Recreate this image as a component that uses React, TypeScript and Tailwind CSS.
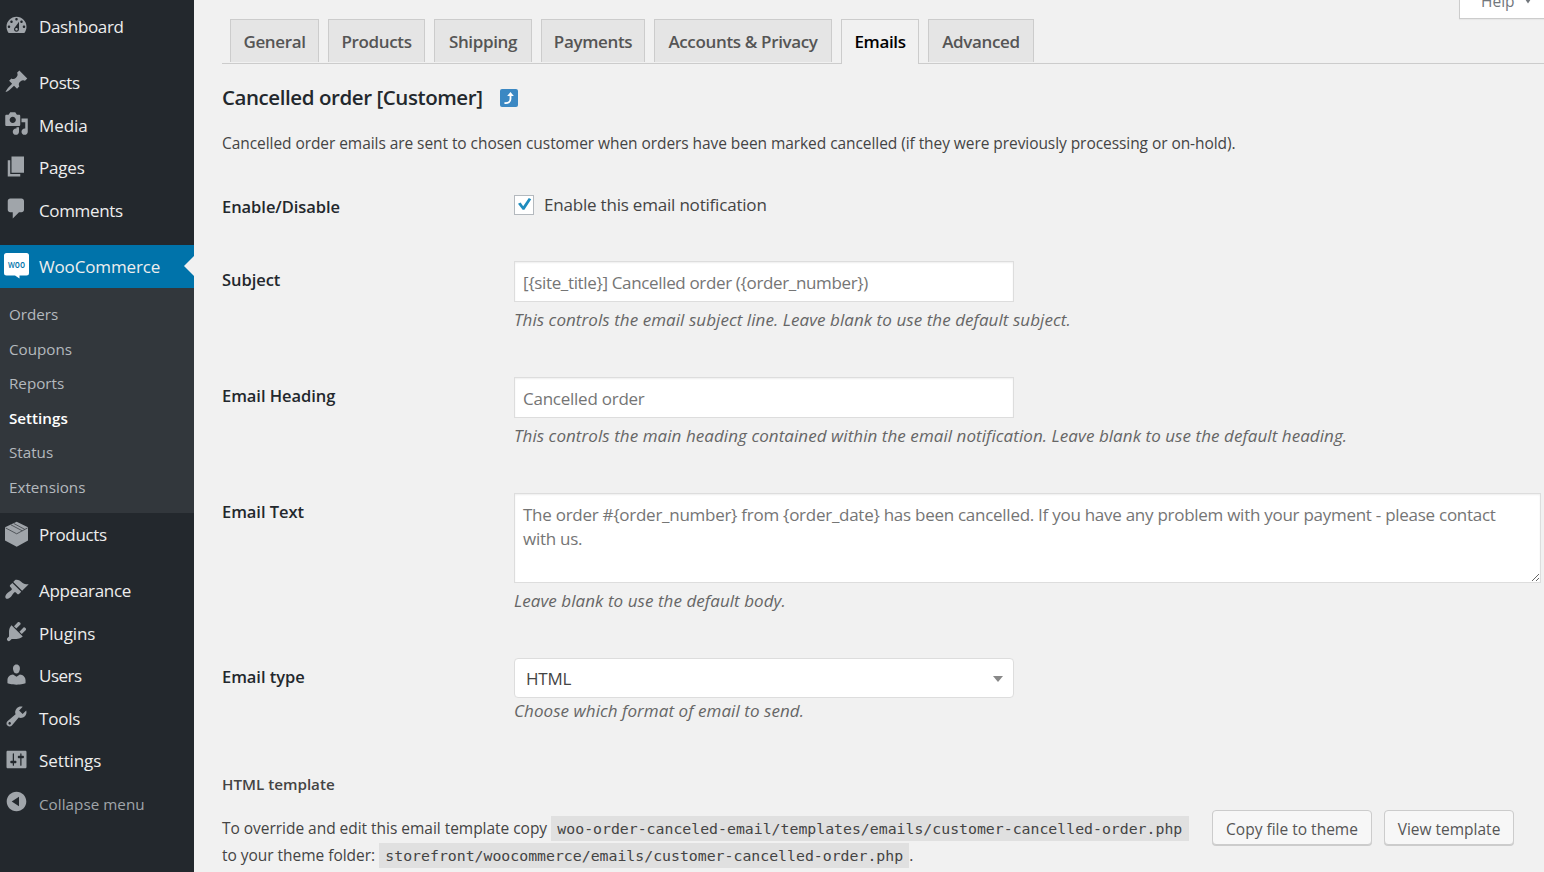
import { useState, type ReactNode } from "react";
import { clsx } from "clsx";

type MenuItem = { label: string; icon: string; tracking: string };

const ICONS: Record<string, string> = {
  dashboard:
    "M3.76 16h12.48c1.1-1.37 1.76-3.11 1.76-5 0-4.42-3.58-8-8-8s-8 3.58-8 8c0 1.89.66 3.63 1.76 5zM10 4c.55 0 1 .45 1 1s-.45 1-1 1-1-.45-1-1 .45-1 1-1zM6 6c.55 0 1 .45 1 1s-.45 1-1 1-1-.45-1-1 .45-1 1-1zm8 0c.55 0 1 .45 1 1s-.45 1-1 1-1-.45-1-1 .45-1 1-1zm-5.37 5.55L12 7v6c0 1.1-.9 2-2 2s-2-.9-2-2c0-.57.24-1.08.63-1.45zM4 10c.55 0 1 .45 1 1s-.45 1-1 1-1-.45-1-1 .45-1 1-1zm12 0c.55 0 1 .45 1 1s-.45 1-1 1-1-.45-1-1 .45-1 1-1zm-5 3c0-.55-.45-1-1-1s-1 .45-1 1 .45 1 1 1 1-.45 1-1z",
  post: "M10.44 3.02l1.82-1.82 6.36 6.35-1.83 1.82c-1.05-.68-2.48-.57-3.41.36l-.75.75c-.92.93-1.04 2.35-.35 3.41l-1.83 1.82-2.41-2.41-2.8 2.79c-.42.42-3.38 2.71-3.8 2.29s1.86-3.39 2.28-3.81l2.79-2.79L4.1 9.36l1.83-1.82c1.05.69 2.48.57 3.4-.36l.75-.75c.93-.92 1.05-2.35.36-3.41z",
  media:
    "M13 11V4c0-.55-.45-1-1-1h-1.67L9 1H5L3.67 3H2c-.55 0-1 .45-1 1v7c0 .55.45 1 1 1h10c.55 0 1-.45 1-1zM7 4.5c1.38 0 2.5 1.12 2.5 2.5S8.38 9.5 7 9.5 4.5 8.38 4.5 7 5.62 4.5 7 4.5zM14 6h5v10.5c0 1.38-1.12 2.5-2.5 2.5S14 17.88 14 16.5s1.12-2.5 2.5-2.5c.17 0 .34.02.5.05V9h-3V6zm-4 8.05V13h2v3.5c0 1.38-1.12 2.5-2.5 2.5S7 17.88 7 16.5 8.12 14 9.5 14c.17 0 .34.02.5.05z",
  page: "M6 15V2h10v13H6zm-1 1h8v2H3V5h2v11z",
  comments: "M5 2h9c1.1 0 2 .9 2 2v7c0 1.1-.9 2-2 2h-2l-5 5v-5H5c-1.1 0-2-.9-2-2V4c0-1.1.9-2 2-2z",
  appearance:
    "M14.48 11.06L7.41 3.99l1.5-1.5c.5-.56 2.3-.47 3.51.32 1.21.8 1.43 1.28 2.91 2.1 1.18.64 2.45 1.26 4.45.85zm-.71.71L6.7 4.7 4.93 6.47c-.39.39-.39 1.02 0 1.41l1.06 1.06c.39.39.39 1.03 0 1.42-.6.6-1.43 1.11-2.21 1.69-.35.26-.7.53-1.01.84C1.43 14.23.4 16.08 1.4 17.07c.99 1 2.84-.03 4.18-1.36.31-.31.58-.66.85-1.02.57-.78 1.08-1.61 1.69-2.21.39-.39 1.02-.39 1.41 0l1.06 1.06c.39.39 1.02.39 1.41 0z",
  plugins:
    "M13.11 4.36L9.87 7.6 8 5.73l3.24-3.24c.35-.34 1.05-.2 1.56.32.52.51.66 1.21.31 1.55zm-8 1.77l.91-1.12 9.01 9.01-1.19.84c-.71.71-2.63 1.16-3.82 1.16H6.14L4.9 17.26c-.59.59-1.54.59-2.12 0-.59-.58-.59-1.53 0-2.12l1.24-1.24v-3.88c0-1.13.4-3.19 1.09-3.89zm7.26 3.97l3.24-3.24c.34-.35 1.04-.21 1.55.31.52.51.66 1.21.31 1.55l-3.24 3.25z",
  users:
    "M10 9.25c-2.27 0-2.73-3.44-2.73-3.44C7 4.02 7.82 2 9.97 2c2.16 0 2.98 2.02 2.71 3.81 0 0-.41 3.44-2.68 3.44zm0 2.57L12.72 10c2.39 0 4.52 2.33 4.52 4.53v2.49s-3.65 1.13-7.24 1.13c-3.65 0-7.24-1.13-7.24-1.13v-2.49c0-2.25 1.94-4.48 4.47-4.48z",
  tools:
    "M16.68 9.77c-1.34 1.34-3.3 1.67-4.95.99l-5.41 6.52c-.99.99-2.59.99-3.58 0s-.99-2.59 0-3.57l6.52-5.42c-.68-1.65-.35-3.61.99-4.95 1.28-1.28 3.12-1.62 4.72-1.06l-2.89 2.89 2.82 2.82 2.86-2.87c.53 1.58.18 3.39-1.08 4.65zM3.81 16.21c.4.39 1.04.39 1.43 0 .4-.4.4-1.04 0-1.43-.39-.4-1.03-.4-1.43 0-.39.39-.39 1.03 0 1.43z",
  settings:
    "M18 16V4c0-.55-.45-1-1-1H3c-.55 0-1 .45-1 1v12c0 .55.45 1 1 1h14c.55 0 1-.45 1-1zM8 11h1c.55 0 1 .45 1 1s-.45 1-1 1H8v1.5c0 .28-.22.5-.5.5s-.5-.22-.5-.5V13H6c-.55 0-1-.45-1-1s.45-1 1-1h1V5.5c0-.28.22-.5.5-.5s.5.22.5.5V11zm5-2h-1c-.55 0-1-.45-1-1s.45-1 1-1h1V5.5c0-.28.22-.5.5-.5s.5.22.5.5V7h1c.55 0 1 .45 1 1s-.45 1-1 1h-1v5.5c0 .28-.22.5-.5.5s-.5-.22-.5-.5V9z",
  collapse:
    "M10 2.16c4.33 0 7.84 3.51 7.84 7.84s-3.51 7.84-7.84 7.84S2.16 14.33 2.16 10 5.71 2.16 10 2.16zm2 11.72V6.12L6.18 9.97z",
};

const MENU_TOP: MenuItem[] = [
  { label: "Posts", icon: "post", tracking: "tracking-[-0.4px]" },
  { label: "Media", icon: "media", tracking: "tracking-[-0.1px]" },
  { label: "Pages", icon: "page", tracking: "tracking-[-0.2px]" },
  { label: "Comments", icon: "comments", tracking: "tracking-[-0.35px]" },
];

const MENU_BOTTOM: MenuItem[] = [
  { label: "Appearance", icon: "appearance", tracking: "tracking-[-0.3px]" },
  { label: "Plugins", icon: "plugins", tracking: "tracking-[-0.1px]" },
  { label: "Users", icon: "users", tracking: "tracking-[-0.5px]" },
  { label: "Tools", icon: "tools", tracking: "tracking-[-0.2px]" },
  { label: "Settings", icon: "settings", tracking: "tracking-[-0.1px]" },
];

const SUBMENU = ["Orders", "Coupons", "Reports", "Settings", "Status", "Extensions"];

const TABS = [
  { label: "General", width: "w-[89px]" },
  { label: "Products", width: "w-[97px]" },
  { label: "Shipping", width: "w-[98px]" },
  { label: "Payments", width: "w-[104px]" },
  { label: "Accounts & Privacy", width: "w-[178px]" },
  { label: "Emails", width: "w-[78px]" },
  { label: "Advanced", width: "w-[106px]" },
];

function MenuRow({ label, tracking = "tracking-[-0.35px]", children }: { label: string; tracking?: string; children: ReactNode }) {
  return (
    <a href="#" className="flex h-[42.5px] items-start pl-1 text-[17px] text-[#eee]">
      <span className="mt-[7.5px] h-[25px] w-[35px] shrink-0">{children}</span>
      <span className={clsx("leading-[43.5px]", tracking)}>{label}</span>
    </a>
  );
}

function DashIcon({ name }: { name: string }) {
  return (
    <svg viewBox="0 0 20 20" className="h-[25px] w-[25px] fill-[#a0a5aa]">
      <path d={ICONS[name]} />
    </svg>
  );
}

function ProductIcon() {
  return (
    <svg viewBox="0 0 25 25" className="h-[25px] w-[25px] overflow-visible">
      <path d="M12.7 .8L24 6.3v13.1L12.7 25.8 1 19.4V6.3z" fill="#a0a5aa" />
      <path d="M1.5 6.9l11.2 5.9 11-5.9M7 3.9l11.3 5.9M9.8 2.5l11 5.9" fill="none" stroke="#3c4146" strokeWidth="0.8" />
    </svg>
  );
}

function WooIcon() {
  return (
    <svg viewBox="0 0 25 26" className="h-[26px] w-[25px] overflow-visible">
      <path d="M2.5 0h20A2.5 2.5 0 0 1 25 2.5V20a2.5 2.5 0 0 1-2.5 2.5H15.5V25.5l-4.5-3H2.5A2.5 2.5 0 0 1 0 20V2.5A2.5 2.5 0 0 1 2.5 0z" fill="#fff" />
      <text x="12.5" y="14.8" textAnchor="middle" textLength="17" lengthAdjust="spacingAndGlyphs" fontSize="9.5" fontWeight="600" fill="#0073aa">
        W<tspan fontSize="11">oo</tspan>
      </text>
    </svg>
  );
}

function Sidebar() {
  return (
    <nav className="flex w-[194px] shrink-0 flex-col bg-[#23282d] pt-[5px]">
      <MenuRow label="Dashboard"><DashIcon name="dashboard" /></MenuRow>
      <div className="mt-[13.75px]">
        {MENU_TOP.map((m) => (
          <MenuRow key={m.label} label={m.label} tracking={m.tracking}><DashIcon name={m.icon} /></MenuRow>
        ))}
      </div>
      <div className="relative mt-[13.75px] bg-[#0073aa] text-white">
        <MenuRow label="WooCommerce" tracking="tracking-[-0.15px]"><WooIcon /></MenuRow>
        <svg viewBox="0 0 10 20" className="absolute top-[11px] right-0 h-5 w-2.5 fill-[#f1f1f1]">
          <path d="M10 0v20L0 10z" />
        </svg>
      </div>
      <div className="flex h-[225.5px] flex-col bg-[#32373c] pt-[9.5px] pl-[9px]">
        {SUBMENU.map((label) => (
          <a key={label} href="#"
            className={clsx("h-[34.6px] text-[15.2px] leading-[34.6px]", label === "Settings" ? "font-semibold text-white" : "text-[#b4b9be]")}>
            {label}
          </a>
        ))}
      </div>
      <MenuRow label="Products"><ProductIcon /></MenuRow>
      <div className="mt-[13.75px]">
        {MENU_BOTTOM.map((m) => (
          <MenuRow key={m.label} label={m.label} tracking={m.tracking}><DashIcon name={m.icon} /></MenuRow>
        ))}
      </div>
      <a href="#" className="flex h-[42.5px] pl-1 text-[15.2px] text-[#a0a5aa]">
        <span className="mt-[7.5px] w-[35px]"><DashIcon name="collapse" /></span>
        <span className="leading-[45px] tracking-[0.05px]">Collapse menu</span>
      </a>
    </nav>
  );
}

function FormRow({ label, height, children }: { label: string; height: string; children: ReactNode }) {
  return (
    <div className={clsx("flex", height)}>
      <div className="w-[292px] shrink-0 pt-[7px] text-[16.5px] leading-6 font-semibold tracking-[-0.05px] text-[#23282d]">{label}</div>
      <div className="min-w-0 flex-1">{children}</div>
    </div>
  );
}

const fieldClass =
  "block border border-[#ddd] bg-white px-2 text-[17px] text-[#32373c] shadow-[inset_0_1px_2px_rgba(0,0,0,0.07)] outline-none placeholder:text-[#757575]";
const hintClass = "text-[17px] leading-6 whitespace-nowrap text-[#666] italic tracking-[0.06px]";
const codeClass = "bg-[#e0e0e0] px-[6.25px] py-1 font-['DejaVu_Sans_Mono',monospace] text-[14.83px] tracking-normal";
const buttonClass =
  "h-[35px] rounded-[4px] border border-[#ccc] bg-[#f7f7f7] pt-1 text-[15.5px] whitespace-nowrap text-[#555] shadow-[0_1px_0_#ccc]";

export default function App() {
  const [enabled, setEnabled] = useState(true);
  const [tab, setTab] = useState("Emails");

  return (
    <div className="flex h-[872px] w-[1544px] overflow-hidden bg-[#f1f1f1] font-['Open_Sans','Noto_Sans',sans-serif] text-[#444]">
      <Sidebar />
      <main className="relative flex min-w-0 flex-1 flex-col pl-7">
        <button className="absolute -top-4 -right-px flex h-[35px] w-[86px] items-center border border-[#ccc] bg-white pl-[21px] text-[15.5px] text-[#72777c] shadow-[0_1px_1px_rgba(0,0,0,0.04)]">
          Help
          <svg viewBox="0 0 8 5" className="ml-[9px] h-[5px] w-2 fill-[#72777c]"><path d="M1 0h6L4 4.5z" /></svg>
        </button>

        {/* Settings tabs */}
        <div className="mt-[19px] flex h-[45px] gap-[9px] border-b border-[#ccc] pl-2">
          {TABS.map((t) => (
            <button key={t.label} onClick={() => setTab(t.label)}
              className={clsx(
                "border border-b-0 border-[#ccc] text-[17px] font-semibold tracking-[-0.35px] whitespace-nowrap",
                t.width,
                t.label === tab ? "h-[45px] bg-[#f1f1f1] pb-px text-black" : "mb-px h-[43px] bg-[#e5e5e5] pt-px text-[#555]",
              )}>
              {t.label}
            </button>
          ))}
        </div>

        <h2 className="mt-[19px] flex h-[30px] items-center text-[20.5px] font-semibold tracking-[-0.43px] text-[#23282d]">
          <span className="w-[278px] pb-[2px] whitespace-nowrap">Cancelled order [Customer]</span>
          <a href="#">
            <svg viewBox="0 0 18 18" className="h-[18px] w-[18px]">
              <rect width="18" height="18" rx="2" fill="#3b88c3" />
              <path d="M4.5 14c3.8.4 6-1 6-4.300V6" fill="none" stroke="#fff" strokeWidth="1.8" />
              <path d="M7.200 7l3.300-4 3.300 4z" fill="#fff" />
            </svg>
          </a>
        </h2>
        <p className="mt-[18px] text-[15.5px] leading-6 tracking-[-0.065px] whitespace-nowrap">
          Cancelled order emails are sent to chosen customer when orders have been marked cancelled (if they were previously processing or on-hold).
        </p>

        <div className="mt-[33px]">
          <FormRow label="Enable/Disable" height="h-[73px]">
            <label className="flex items-center pt-[5px]">
              <input type="checkbox" checked={enabled} onChange={(e) => setEnabled(e.target.checked)} className="sr-only" />
              <span className="flex h-5 w-5 items-center justify-center border border-[#b4b9be] bg-white">
                {enabled && (
                  <svg viewBox="0 0 18 18" className="h-[18px] w-[18px] fill-[#1e8cbe]">
                    <path d="M3 7.800l2.600-1.200 2.600 3.600L13.800 2l2.400 1.300-6.800 10.400H7.600z" />
                  </svg>
                )}
              </span>
              <span className="ml-2.5 text-[17px] leading-6 tracking-[-0.2px]">Enable this email notification</span>
            </label>
          </FormRow>

          <FormRow label="Subject" height="h-[116px]">
            <input placeholder="[{site_title}] Cancelled order ({order_number})" className={clsx(fieldClass, "h-[41px] w-[500px] pt-px tracking-[-0.35px]")} />
            <p className={clsx(hintClass, "mt-1.5")}>This controls the email subject line. Leave blank to use the default subject.</p>
          </FormRow>

          <FormRow label="Email Heading" height="h-[116px]">
            <input placeholder="Cancelled order" className={clsx(fieldClass, "h-[41px] w-[500px] pt-px tracking-[-0.25px]")} />
            <p className={clsx(hintClass, "mt-1.5")}>
              This controls the main heading contained within the email notification. Leave blank to use the default heading.
            </p>
          </FormRow>

          <FormRow label="Email Text" height="h-[165px]">
            <textarea
              placeholder="The order #{order_number} from {order_date} has been cancelled. If you have any problem with your payment - please contact with us."
              className={clsx(fieldClass, "h-[90px] w-[1027px] pt-[9px] pr-8 leading-6 tracking-[-0.27px]")}
            />
            <p className={clsx(hintClass, "mt-1.5")}>Leave blank to use the default body.</p>
          </FormRow>

          <FormRow label="Email type" height="h-[114px]">
            <button className="flex h-10 w-[500px] items-center justify-between rounded-[4px] border border-[#ddd] bg-white pt-px pr-2.5 pl-[11px] text-[17px] tracking-[-0.2px]">
              HTML
              <svg viewBox="0 0 10 6" className="h-1.5 w-2.5 fill-[#888]"><path d="M0 0h10L5 6z" /></svg>
            </button>
            <p className={clsx(hintClass, "mt-px")}>Choose which format of email to send.</p>
          </FormRow>
        </div>

        {/* Template override */}
        <h4 className="text-[15.2px] leading-6 font-semibold">HTML template</h4>
        <div className="flex pt-[14px]">
          <p className="w-[990px] pt-[5px] text-[15.5px] leading-[26px] tracking-[-0.03px] whitespace-nowrap">
            To override and edit this email template copy <code className={codeClass}>woo-order-canceled-email/templates/emails/customer-cancelled-order.php</code>
            <br />
            to your theme folder: <code className={codeClass}>storefront/woocommerce/emails/customer-cancelled-order.php</code>.
          </p>
          <button className={clsx(buttonClass, "w-[160px]")}>Copy file to theme</button>
          <button className={clsx(buttonClass, "ml-3 w-[130px]")}>View template</button>
        </div>
      </main>
    </div>
  );
}
